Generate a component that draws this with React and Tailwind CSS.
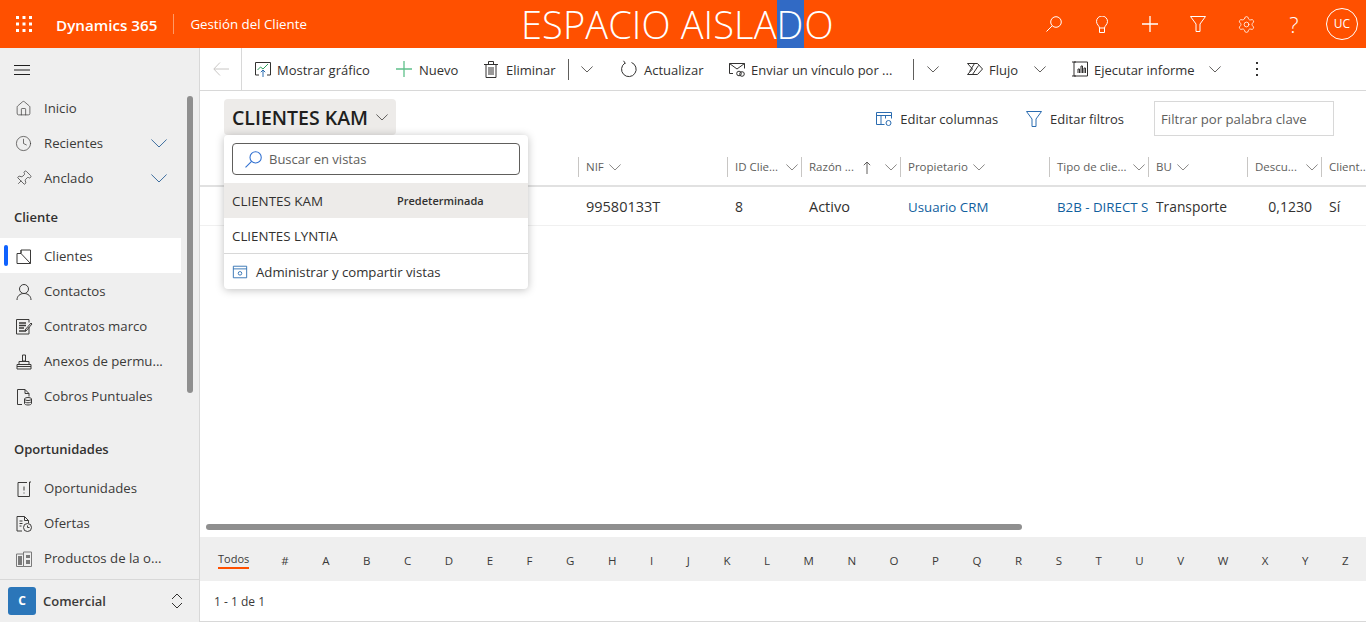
import React from "react";
import { Home, Clock, Pin, Settings } from "lucide-react";

const FONT = "font-['Open_Sans','Liberation_Sans',sans-serif]";

// small outline icons that lucide does not have
function Svg({ children, size = 18, className = "" }) {
  return (
    <svg width={size} height={size} viewBox="0 0 18 18" fill="none" stroke="currentColor" strokeWidth="1" className={"shrink-0 " + className}>
      {children}
    </svg>
  );
}

const ChartIcon = () => (
  <Svg>
    <path d="M5 15H1.500V2.500h15V15H13" stroke="#323130" />
    <path d="M3.500 10l3-3 2.500 2 5-5" stroke="#2e9e5b" />
    <path d="M9 17V10M6.800 12.200L9 10l2.200 2.200" stroke="#2b6cb0" />
  </Svg>
);
const MailIcon = () => (
  <Svg>
    <path d="M5 13.500H1.500v-10h15v5" />
    <path d="M1.500 3.500L9 9l7.500-5.500" />
    <circle cx="11" cy="13.500" r="2.300" />
    <circle cx="14" cy="14" r="2.300" />
  </Svg>
);
const FlowIcon = () => (
  <Svg>
    <path d="M1.500 3.500h10l5 5.500-5 5.500h-10l5-5.500z" />
    <path d="M6.500 14.500l6-9M3.500 11.500l5-8" />
  </Svg>
);
const ReportIcon = () => (
  <Svg>
    <path d="M3 2h13.500v14H3M1 2h4M1 16h4M3 2v14" />
    <path d="M7 13V9h1.500v4M10 13V6h1.500v7M13 13V8h1.500v5" />
  </Svg>
);
const TrashIcon = () => (
  <svg width="14" height="17" viewBox="0 0 14 17" fill="none" stroke="#323130" className="mr-[3px] shrink-0">
    <path d="M0 3.500h14M4.500 3.500V.5h5v3M2 3.500v13h10v-13M5 6v8M7 6v8M9 6v8" />
  </svg>
);
const RefreshIcon = () => (
  <svg width="18" height="18" viewBox="0 0 18 18" fill="none" stroke="#323130" className="mr-[1px] shrink-0">
    <path d="M11.500 2.500a7.300 7.300 0 1 1-6.500.6" />
    <path d="M3.500 .8L5.500 3.500" />
  </svg>
);
const PlusIcon = ({ className = "" }) => (
  <svg width="16" height="16" viewBox="0 0 16 16" stroke="currentColor" strokeWidth="1.300" className={"shrink-0 " + className}>
    <path d="M8 0v16M0 8h16" />
  </svg>
);
const ColumnsIcon = () => (
  <Svg>
    <path d="M1.500 2.500h15v6M1.500 2.500v12h8" stroke="#2b6cb0" />
    <path d="M1.500 5.500h15M6 5.500v9M10.500 5.500v3" stroke="#2b6cb0" />
    <circle cx="13.500" cy="13" r="2.500" stroke="#2b6cb0" />
  </Svg>
);
const ManageIcon = () => (
  <Svg size={16}>
    <path d="M1.500 2.500h15v13h-15zM1.500 5.500h15" stroke="#2b6cb0" />
    <circle cx="9" cy="10.500" r="2" stroke="#2b6cb0" />
  </Svg>
);
const FunnelIcon = ({ className = "" }) => (
  <svg width="16" height="16" viewBox="0 0 16 16" fill="none" stroke="currentColor" className={"shrink-0 " + className}>
    <path d="M.5 .5h15L10 8v7.500H6V8z" />
  </svg>
);
const SearchIcon = ({ size = 16, className = "" }) => (
  <svg width={size} height={size} viewBox="0 0 16 16" fill="none" stroke="currentColor" className={"shrink-0 " + className}>
    <circle cx="10" cy="6" r="5.300" />
    <path d="M6.200 9.800L.5 15.500" />
  </svg>
);
const BulbIcon = () => (
  <svg width="12" height="17" viewBox="0 0 12 17" fill="none" stroke="#fff" className="shrink-0">
    <path d="M3.500 12c0-2-3-3.500-3-6.500a5.500 5.500 0 0 1 11 0c0 3-3 4.500-3 6.500zM3.500 12v4.500h5V12" />
  </svg>
);
const ClientsIcon = () => (
  <Svg>
    <path d="M2 5.500h4V2h9.500v13.500H2z" />
    <path d="M6 5.500l9.500 10M6 2v3.500" />
  </Svg>
);
const UserIcon = () => (
  <Svg>
    <circle cx="9" cy="6" r="4.500" />
    <path d="M2 17c0-4 3-6.500 7-6.500s7 2.500 7 6.500" />
  </Svg>
);
const ContractIcon = () => (
  <Svg>
    <path d="M14 9v7H1.500V1.500H14v3" />
    <path d="M4 5h7M4 7.500h7M4 10h5M4 13h7" strokeWidth="1.300" />
    <path d="M10 12l6-7 1 1-6 7z" />
  </Svg>
);
const StampIcon = () => (
  <Svg>
    <path d="M7.500 2h3v6h-3zM4 8.500h10v3H4zM2 11.500h14v4.500H2zM2 13.500h14" />
  </Svg>
);
const BillIcon = () => (
  <Svg>
    <path d="M7 16.500H2.500v-15H10l4 4v3M10 1.500v4h4" />
    <ellipse cx="13" cy="11" rx="3.500" ry="1.500" />
    <path d="M9.500 11v4.500c0 .8 1.500 1.500 3.500 1.500s3.500-.7 3.500-1.500V11M9.500 13.300c0 .8 1.500 1.500 3.500 1.500s3.500-.7 3.500-1.500" />
  </Svg>
);
const OpportunityIcon = () => (
  <Svg>
    <path d="M12 2.500H3v14h11.500V2M14.500 2h1.500" />
    <path d="M9 6.500v4M9 12.500v1" />
  </Svg>
);
const OfferIcon = () => (
  <Svg>
    <path d="M7 16H2V1.500h7.500l4 4V8M9.500 1.500v4h4" />
    <path d="M4.500 6h3M4.500 8.500h3M4.500 11h2" strokeWidth="1.200" />
    <circle cx="12.500" cy="12.500" r="4" />
    <path d="M12.500 10.500v2h2" />
  </Svg>
);
const ProductIcon = () => (
  <Svg className="text-[#7a7a7a]">
    <path d="M1.500 4h7v12.500h-7zM8.500 2h8v14.500h-8z" />
    <path d="M3 6h4v9H3zM11 5h4v3h-4zM11 10h4v4h-4z" fill="currentColor" stroke="none" />
  </Svg>
);
const UpDownIcon = () => (
  <svg width="14" height="18" viewBox="0 0 14 18" fill="none" stroke="#323130" className="shrink-0">
    <path d="M2 7l5-5 5 5M2 11l5 5 5-5" />
  </svg>
);
const HamburgerIcon = () => (
  <svg width="16" height="10" viewBox="0 0 16 10" stroke="#1f1f1f" className="shrink-0">
    <path d="M0 .5h16M0 5h16M0 9.500h16" />
  </svg>
);
const WaffleIcon = () => (
  <svg width="16" height="16" viewBox="0 0 16 16" fill="#fff" className="shrink-0">
    {[0, 6.5, 13].map((y) =>
      [0, 6.5, 13].map((x) => <rect key={x + "-" + y} x={x} y={y} width="3" height="3" />)
    )}
  </svg>
);
const BackIcon = () => (
  <svg width="16" height="14" viewBox="0 0 16 14" fill="none" stroke="#c8c6c4" className="shrink-0">
    <path d="M16 7H1M7 .5L.8 7 7 13.500" />
  </svg>
);
const SortIcon = () => (
  <svg width="8" height="13" viewBox="0 0 8 13" fill="none" stroke="#605e5c" className="ml-[9px] shrink-0">
    <path d="M4 13V1M.8 4.200L4 1l3.200 3.200" />
  </svg>
);

// thin chevron, 12px wide, sitting in a 16px box
const Chev = ({ className = "text-[#605e5c]" }) => (
  <span className="flex w-[16px] shrink-0 justify-center">
    <svg width="12" height="7" viewBox="0 0 12 7" fill="none" stroke="currentColor" className={className}>
      <path d="M.4 .5L6 6l5.600-5.500" />
    </svg>
  </span>
);

function NavItem({ icon, label, active, chevron }) {
  return (
    <div className="relative flex h-[35px] w-[181px] items-center pl-[15px] text-[13.2px] text-[#3b3a39]">
      {active && <span className="absolute inset-x-0 -top-px bottom-px bg-white" />}
      {active && <span className="absolute left-[4px] top-[6px] h-[21px] w-[4px] rounded-sm bg-[#0f62fe]" />}
      <span className="relative flex w-[29px] shrink-0 items-center">{icon}</span>
      <span className="relative whitespace-nowrap">{label}</span>
      {chevron && (
        <svg width="16" height="9" viewBox="0 0 16 9" fill="none" stroke="#3f6f9f" className="ml-auto mr-[14px] shrink-0">
          <path d="M.4 .5L8 8l7.600-7.500" />
        </svg>
      )}
    </div>
  );
}

function Sidebar() {
  return (
    <aside className="relative flex h-full w-[200px] shrink-0 flex-col border-r border-[#d8d8d8] bg-[#efefef]">
      <div className="flex h-[43px] shrink-0 items-center pl-[14px]">
        <HamburgerIcon />
      </div>
      <div className="min-h-0 flex-1 overflow-hidden">
        <NavItem icon={<Home size={17} strokeWidth={1} />} label="Inicio" />
        <NavItem icon={<Clock size={17} strokeWidth={1} />} label="Recientes" chevron />
        <NavItem icon={<Pin size={17} strokeWidth={1} className="rotate-45" />} label="Anclado" chevron />
        <div className="flex h-[43px] items-center pl-[14px] text-[13px] font-semibold text-[#323130]">Cliente</div>
        <NavItem active icon={<ClientsIcon />} label="Clientes" />
        <NavItem icon={<UserIcon />} label="Contactos" />
        <NavItem icon={<ContractIcon />} label="Contratos marco" />
        <NavItem icon={<StampIcon />} label="Anexos de permu..." />
        <NavItem icon={<BillIcon />} label="Cobros Puntuales" />
        <div className="flex h-[57px] items-center pl-[14px] pt-[15px] text-[13px] font-semibold text-[#323130]">Oportunidades</div>
        <NavItem icon={<OpportunityIcon />} label="Oportunidades" />
        <NavItem icon={<OfferIcon />} label="Ofertas" />
        <NavItem icon={<ProductIcon />} label="Productos de la o..." />
      </div>
      <div className="flex h-[43px] shrink-0 items-center border-t border-[#d8d8d8] pl-[8px] pr-[15px]">
        <span className="flex h-[28px] w-[28px] items-center justify-center rounded-[3px] bg-[#2b76b9] text-[12px] font-bold text-white">C</span>
        <span className="ml-[7px] pt-[2px] text-[13px] font-semibold text-[#3b3a39]">Comercial</span>
        <span className="ml-auto"><UpDownIcon /></span>
      </div>
      <span className="absolute left-[187px] top-[48px] h-[297px] w-[6px] rounded-full bg-[#8f8f8f]" />
    </aside>
  );
}

function CmdButton({ icon, label, className = "" }) {
  return (
    <div className={"flex items-center text-[13px] text-[#323130] " + className}>
      {icon}
      <span className="ml-[5px] whitespace-nowrap pt-[4px]">{label}</span>
    </div>
  );
}

function CommandBar() {
  return (
    <div className="flex h-[43px] shrink-0 items-center border-b border-[#d8d8d8]">
      <div className="flex h-full w-[42px] shrink-0 items-center justify-center border-r border-[#d8d8d8]">
        <BackIcon />
      </div>
      <CmdButton className="ml-[12px] w-[142px]" icon={<ChartIcon />} label="Mostrar gráfico" />
      <CmdButton className="w-[88px]" icon={<PlusIcon className="mr-[2px] text-[#5fc08a]" />} label="Nuevo" />
      <CmdButton className="w-[84px]" icon={<TrashIcon />} label="Eliminar" />
      <span className="h-[21px] w-px bg-[#605e5c]" />
      <span className="ml-[10px] w-[41px]"><Chev /></span>
      <CmdButton className="w-[108px]" icon={<RefreshIcon />} label="Actualizar" />
      <CmdButton className="w-[185px]" icon={<MailIcon />} label="Enviar un vínculo por ..." />
      <span className="h-[21px] w-px bg-[#605e5c]" />
      <span className="ml-[11px] w-[41px]"><Chev /></span>
      <CmdButton className="w-[66px]" icon={<FlowIcon />} label="Flujo" />
      <span className="w-[39px]"><Chev /></span>
      <CmdButton className="w-[136px]" icon={<ReportIcon />} label="Ejecutar informe" />
      <span className="w-[41px]"><Chev /></span>
      <span className="ml-[8px] flex flex-col gap-[4px]">
        <span className="h-[2px] w-[2px] bg-[#323130]" />
        <span className="h-[2px] w-[2px] bg-[#323130]" />
        <span className="h-[2px] w-[2px] bg-[#323130]" />
      </span>
    </div>
  );
}

const columns = [
  { w: "w-[149px]", label: "NIF", value: "99580133T", size: "text-[14.5px]" },
  { w: "w-[74px]", label: "ID Clie...", value: "8", right: true, size: "text-[14px]" },
  { w: "w-[99px]", label: "Razón ...", value: "Activo", sort: true, right: true, size: "text-[14.5px]" },
  { w: "w-[149px]", label: "Propietario", value: "Usuario CRM", link: true, size: "text-[13.3px]" },
  { w: "w-[99px]", label: "Tipo de clie...", value: "B2B - DIRECT S", link: true, right: true, size: "text-[13.3px]" },
  { w: "w-[99px]", label: "BU", value: "Transporte", size: "text-[13.8px]" },
  { w: "w-[74px]", label: "Descu...", value: "0,1230", right: true, alignEnd: true, size: "text-[14px]" },
  { w: "w-[45px]", label: "Client...", value: "Sí", noChev: true, size: "text-[14px]" },
];

function Grid() {
  return (
    <div className="shrink-0">
      <div className="flex h-[32px] items-start border-b-2 border-[#e1e1e1] pl-[378px] pt-[2px]">
        {columns.map((c) => (
          <div key={c.label} className={"flex h-[20px] shrink-0 items-center overflow-hidden border-l border-[#c8c6c4] pl-[7px] text-[11.5px] text-[#605e5c] " + c.w}>
            <span className="whitespace-nowrap">{c.label}</span>
            {c.sort && <SortIcon />}
            {!c.noChev && <span className={c.right ? "ml-auto pr-[1px]" : "ml-[3px]"}><Chev className="text-[#8a8886]" /></span>}
          </div>
        ))}
      </div>
      <div className="flex h-[39px] items-center border-b border-[#f0f0f0] pl-[378px] pt-[2px]">
        {columns.map((c) => (
          <div
            key={c.label}
            className={
              "shrink-0 overflow-hidden whitespace-nowrap pl-[8px] leading-[20px] " +
              c.size + " " +
              (c.link ? "text-[#11609e] " : "text-[#323130] ") +
              (c.alignEnd ? "pr-[9px] text-right " : "") +
              c.w
            }
          >
            {c.value}
          </div>
        ))}
      </div>
    </div>
  );
}

function ViewMenu() {
  return (
    <div className="absolute left-[24px] top-[87px] z-10 w-[304px] rounded-sm bg-white shadow-[0_1px_8px_rgba(0,0,0,0.25)]">
      <div className="p-[8px]">
        <div className="flex h-[32px] items-center rounded-sm border border-[#605e5c] pl-[12px] text-[13px] text-[#605e5c]">
          <SearchIcon size={17} className="text-[#2f6fd0]" />
          <span className="ml-[7px] pt-[1px]">Buscar en vistas</span>
        </div>
      </div>
      <div className="flex h-[35px] items-center bg-[#edebe9] pl-[8px] pt-[2px] text-[13.4px] text-[#323130]">
        CLIENTES KAM
        <span className="absolute left-[173px] text-[11px] font-semibold">Predeterminada</span>
      </div>
      <div className="flex h-[36px] items-center border-b border-[#d8d8d8] pl-[8px] pt-[2px] text-[13.3px] text-[#323130]">CLIENTES LYNTIA</div>
      <div className="flex h-[35px] items-center pl-[8px] text-[13.2px] text-[#323130]">
        <ManageIcon />
        <span className="ml-[8px] pt-[2px]">Administrar y compartir vistas</span>
      </div>
    </div>
  );
}

function TitleRow() {
  return (
    <div className="flex h-[64px] shrink-0 items-start pl-[24px] pr-[32px] pt-[8px]">
      <div className="flex h-[36px] w-[172px] items-center rounded-sm bg-[#edebe9] pl-[8px]">
        <span className="whitespace-nowrap pt-[2px] text-[19.5px] font-semibold text-[#201f1e]">CLIENTES KAM</span>
        <span className="ml-auto mr-[6px]"><Chev /></span>
      </div>
      <div className="ml-auto mt-[2px] flex items-center text-[13px] text-[#323130]">
        <ColumnsIcon />
        <span className="ml-[7px] mr-[28px] pt-[2px]">Editar columnas</span>
        <FunnelIcon className="mr-[1px] text-[#2b6cb0]" />
        <span className="ml-[7px] mr-[30px] pt-[2px]">Editar filtros</span>
        <div className="flex h-[35px] w-[180px] items-center border border-[#d8d8d8] pl-[6px] pt-[2px] text-[13.2px] text-[#605e5c]">Filtrar por palabra clave</div>
      </div>
    </div>
  );
}

const letters = "#ABCDEFGHIJKLMNOPQRSTUVWXYZ".split("");

function AlphaBar() {
  return (
    <div className="flex h-[44px] shrink-0 items-center bg-[#efefef] pl-[18px] text-[11.5px] text-[#3b3a39]">
      <span className="w-[46.5px] shrink-0 text-[11px]">
        <span className="inline-block border-b-2 border-[#ff5000] leading-[17px]">Todos</span>
      </span>
      {letters.map((l) => (
        <span key={l} className="shrink-0 px-[16.78px] pt-[4px] text-center">{l}</span>
      ))}
    </div>
  );
}

function TopIcon({ children }) {
  return <span className="flex w-[48px] shrink-0 items-center justify-center">{children}</span>;
}

export default function App() {
  return (
    <div className={"flex h-[622px] w-[1366px] flex-col overflow-hidden bg-white " + FONT}>
      <header className="relative flex h-[48px] shrink-0 items-center bg-[#ff5000] text-white">
        <span className="ml-[16px]"><WaffleIcon /></span>
        <span className="ml-[24px] pt-[2px] text-[15.2px] font-semibold">Dynamics 365</span>
        <span className="ml-[16px] h-[20px] w-px bg-[#ff9a66]" />
        <span className="ml-[16px] pt-[2px] text-[13.3px]">Gestión del Cliente</span>
        <div className="absolute left-[521px] top-0 flex h-[48px] items-center text-[38px] font-light leading-[48px] tracking-[0.1px]">
          <span>ESPACIO AISLA</span>
          <span className="h-[48px] bg-[#316ac5]">D</span>
          <span className="ml-[1px]">O</span>
        </div>
        <div className="ml-auto flex items-center">
          <TopIcon><SearchIcon /></TopIcon>
          <TopIcon><BulbIcon /></TopIcon>
          <TopIcon><PlusIcon /></TopIcon>
          <TopIcon><FunnelIcon /></TopIcon>
          <TopIcon><Settings size={19} strokeWidth={1} /></TopIcon>
          <TopIcon><span className="text-[22px] font-light leading-none">?</span></TopIcon>
          <TopIcon>
            <span className="flex h-[32px] w-[32px] items-center justify-center rounded-full border border-white text-[12px]">UC</span>
          </TopIcon>
        </div>
      </header>
      <div className="flex min-h-0 flex-1">
        <Sidebar />
        <main className="relative flex min-w-0 flex-1 flex-col">
          <CommandBar />
          <TitleRow />
          <Grid />
          <ViewMenu />
          <div className="flex min-h-0 flex-1 items-end pb-[7px] pl-[6px]">
            <span className="h-[6px] w-[816px] rounded-full bg-[#8f8f8f]" />
          </div>
          <AlphaBar />
          <div className="flex h-[41px] shrink-0 items-center border-b border-[#d8d8d8] pl-[14px] pt-[2px] text-[12px] text-[#3b3a39]">1 - 1 de 1</div>
        </main>
      </div>
    </div>
  );
}
